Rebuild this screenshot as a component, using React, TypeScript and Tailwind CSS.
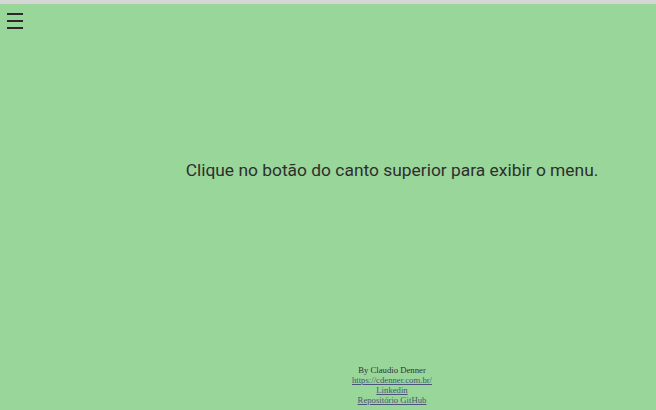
import React from "react";

export default function App() {
  return (
    <div className="w-[656px] h-[410px] bg-[#99d699] flex flex-col overflow-hidden">
      <div className="h-[4px] bg-[#d6d6d6] shrink-0" />
      <div className="flex-1 flex flex-col relative">
        <button className="absolute left-[7px] top-[7px] w-[17px] h-[20px] flex flex-col justify-center gap-[5px]">
          <span className="block h-[2px] w-[16px] bg-[#2a2a2a]" />
          <span className="block h-[2px] w-[16px] bg-[#2a2a2a]" />
          <span className="block h-[2px] w-[16px] bg-[#2a2a2a]" />
        </button>
        <div className="flex-1 flex flex-col pl-[128px]">
          <div className="h-[155px]" />
          <p className="text-center text-[17.4px] leading-[22px] text-[#2e2e2e] font-['Roboto',sans-serif]">
            Clique no botão do canto superior para exibir o menu.
          </p>
          <div className="flex-1" />
          <div className="flex flex-col items-center text-[8.7px] leading-[10px] font-['Liberation_Serif',serif] text-[#333] pb-[5px]">
            <span>By Claudio Denner</span>
            <a className="underline text-[#4b5577]" href="#">https://cdenner.com.br/</a>
            <a className="underline text-[#4b5577]" href="#">Linkedin</a>
            <a className="underline text-[#4b5577]" href="#">Repositório GitHub</a>
          </div>
        </div>
      </div>
    </div>
  );
}
